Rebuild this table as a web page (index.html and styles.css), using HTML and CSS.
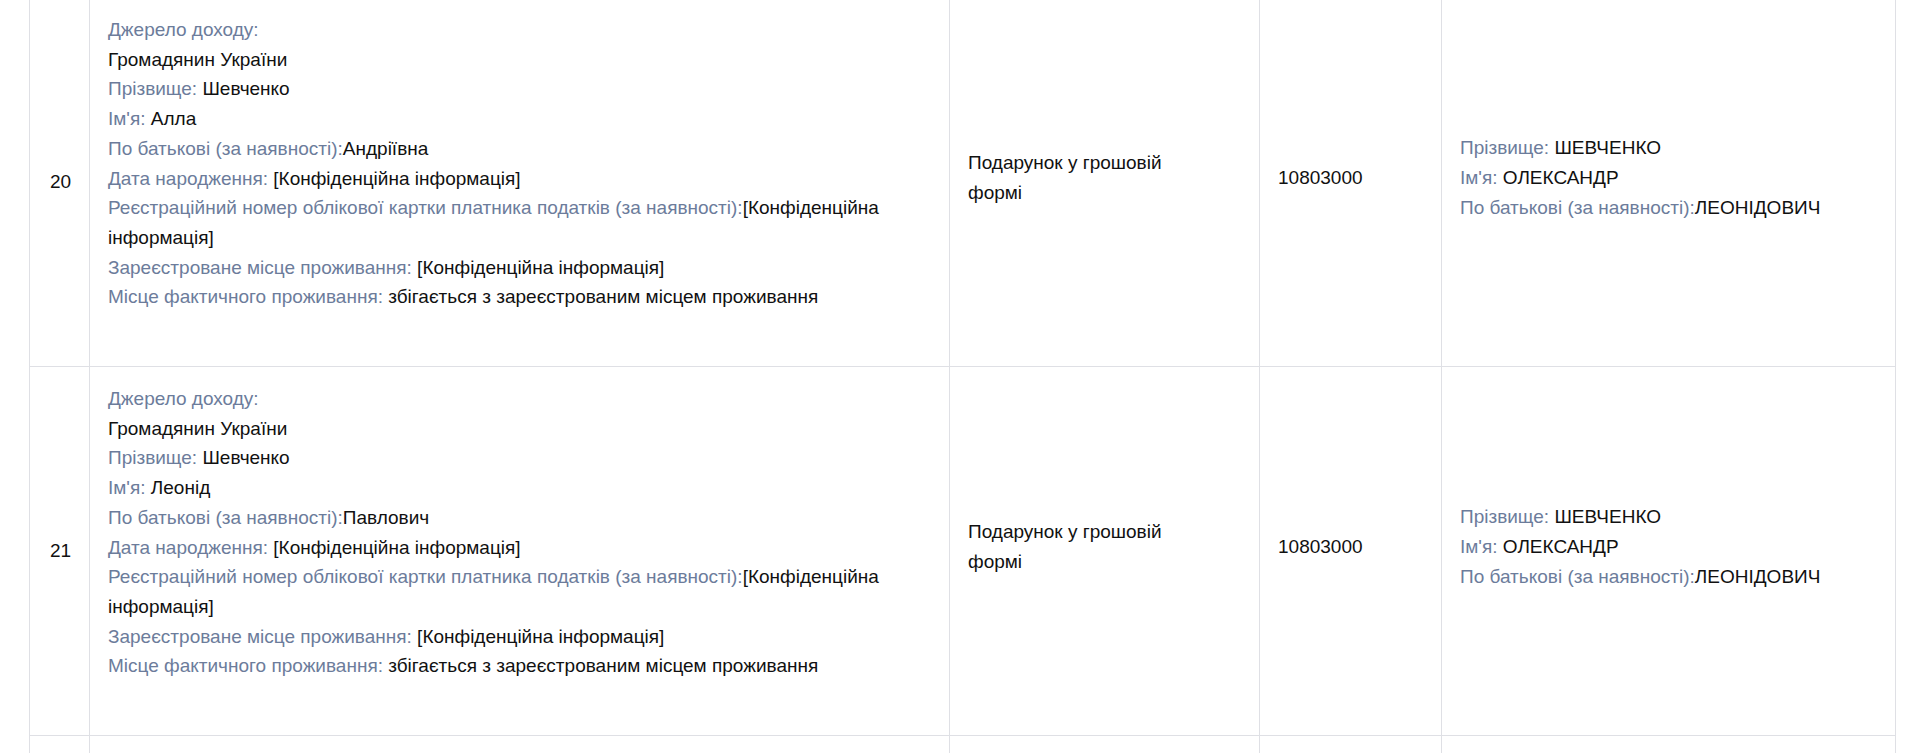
FILE: index.html
```html
<!DOCTYPE html>
<html lang="uk">
<head>
<meta charset="utf-8">
<title>Доходи</title>
<link rel="stylesheet" href="styles.css">
</head>
<body>
<div class="table-wrap">
<table class="decl-table">
  <colgroup>
    <col class="c-num"><col class="c-source"><col class="c-type"><col class="c-amount"><col class="c-person">
  </colgroup>
  <tbody>
    <tr>
      <td class="num">20</td>
      <td class="source">
        <div class="field"><span class="label">Джерело доходу:</span></div>
        <div class="field">Громадянин України</div>
        <div class="field"><span class="label">Прізвище:</span> Шевченко</div>
        <div class="field"><span class="label">Ім'я:</span> Алла</div>
        <div class="field"><span class="label">По батькові (за наявності):</span>Андріївна</div>
        <div class="field"><span class="label">Дата народження:</span> [Конфіденційна інформація]</div>
        <div class="field"><span class="label">Реєстраційний номер облікової картки платника податків (за наявності):</span>[Конфіденційна інформація]</div>
        <div class="field"><span class="label">Зареєстроване місце проживання:</span> [Конфіденційна інформація]</div>
        <div class="field"><span class="label">Місце фактичного проживання:</span> збігається з зареєстрованим місцем проживання</div>
      </td>
      <td class="type"><div class="type-text">Подарунок у грошовій формі</div></td>
      <td class="amount">10803000</td>
      <td class="person">
        <div class="field"><span class="label">Прізвище:</span> ШЕВЧЕНКО</div>
        <div class="field"><span class="label">Ім'я:</span> ОЛЕКСАНДР</div>
        <div class="field"><span class="label">По батькові (за наявності):</span>ЛЕОНІДОВИЧ</div>
      </td>
    </tr>
    <tr>
      <td class="num">21</td>
      <td class="source">
        <div class="field"><span class="label">Джерело доходу:</span></div>
        <div class="field">Громадянин України</div>
        <div class="field"><span class="label">Прізвище:</span> Шевченко</div>
        <div class="field"><span class="label">Ім'я:</span> Леонід</div>
        <div class="field"><span class="label">По батькові (за наявності):</span>Павлович</div>
        <div class="field"><span class="label">Дата народження:</span> [Конфіденційна інформація]</div>
        <div class="field"><span class="label">Реєстраційний номер облікової картки платника податків (за наявності):</span>[Конфіденційна інформація]</div>
        <div class="field"><span class="label">Зареєстроване місце проживання:</span> [Конфіденційна інформація]</div>
        <div class="field"><span class="label">Місце фактичного проживання:</span> збігається з зареєстрованим місцем проживання</div>
      </td>
      <td class="type"><div class="type-text">Подарунок у грошовій формі</div></td>
      <td class="amount">10803000</td>
      <td class="person">
        <div class="field"><span class="label">Прізвище:</span> ШЕВЧЕНКО</div>
        <div class="field"><span class="label">Ім'я:</span> ОЛЕКСАНДР</div>
        <div class="field"><span class="label">По батькові (за наявності):</span>ЛЕОНІДОВИЧ</div>
      </td>
    </tr>
    <tr class="row-next">
      <td class="num"></td>
      <td class="source"></td>
      <td class="type"></td>
      <td class="amount"></td>
      <td class="person"></td>
    </tr>
  </tbody>
</table>
</div>
</body>
</html>
```
FILE: styles.css
```css
html {
  overflow: hidden;
  background: #ffffff;
}
body {
  margin: 0;
  font-family: "Liberation Sans", Arial, Helvetica, sans-serif;
  font-size: 19px;
  line-height: 29.7px;
  color: #111111;
}
.table-wrap {
  margin: -3px 24px 0 29px;
}
.decl-table {
  width: 100%;
  border-collapse: collapse;
  table-layout: fixed;
}
.c-num { width: 60px; }
.c-source { width: 860px; }
.c-type { width: 310px; }
.c-amount { width: 182px; }
.c-person { width: auto; }

.decl-table td {
  border: 1px solid #dfe0e5;
  vertical-align: middle;
  padding: 0 18px 8px 18px;
  text-align: left;
}
.decl-table td.num {
  text-align: center;
  padding: 0 0 0 2px;
}
.decl-table td.source {
  padding: 17px 18px 54px 18px;
}
.type-text {
  max-width: 230px;
}
.row-next td {
  height: 368px;
}
.label {
  color: #6c7c9b;
}
```
